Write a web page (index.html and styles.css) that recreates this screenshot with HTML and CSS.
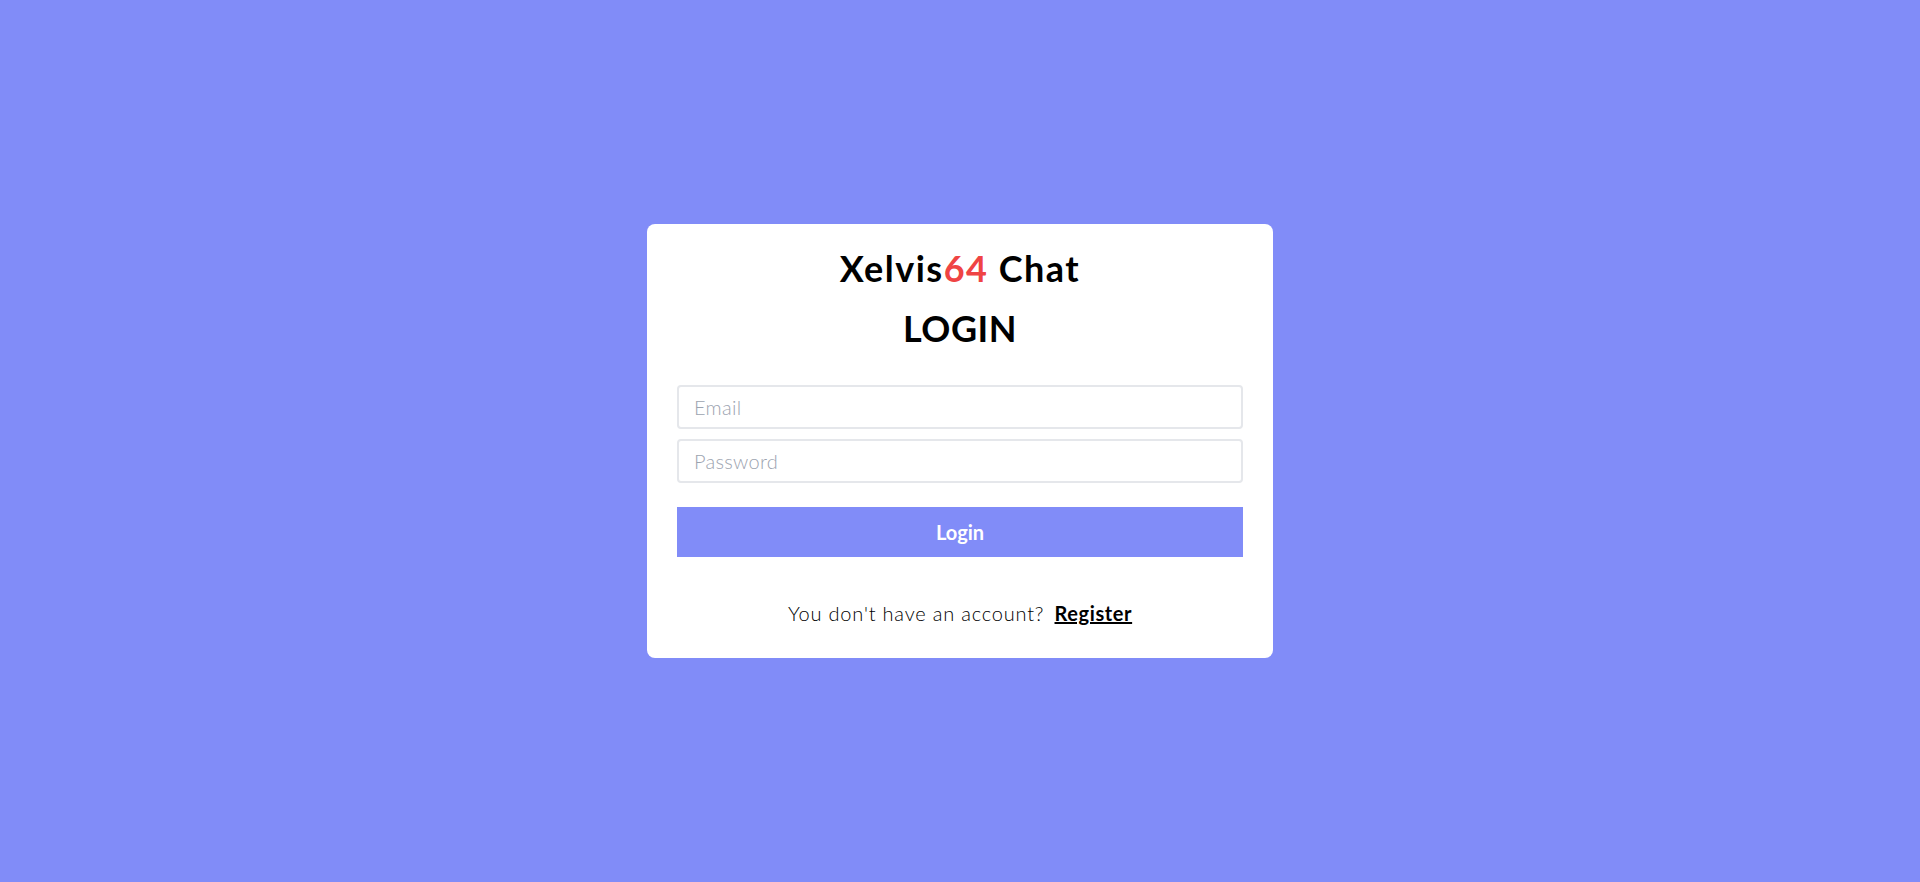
FILE: index.html
```html
<!DOCTYPE html>
<html lang="en">
<head>
<meta charset="utf-8">
<title>Xelvis64 Chat - Login</title>
<link rel="stylesheet" href="styles.css">
</head>
<body>
<main class="page">
  <div class="card">
    <h1 class="brand">Xelvis<span class="accent">64</span> Chat</h1>
    <h2 class="heading">LOGIN</h2>
    <form class="form">
      <input class="field" type="email" placeholder="Email">
      <input class="field" type="password" placeholder="Password">
      <button class="btn" type="button">Login</button>
    </form>
    <p class="footer">You don't have an account? <a class="link" href="#">Register</a></p>
  </div>
</main>
</body>
</html>
```

FILE: styles.css
```css
* { box-sizing: border-box; }
html, body { margin: 0; height: 100%; }
body {
  background: #818cf8;
  font-family: Lato, "Noto Sans", sans-serif;
}
.page {
  min-height: 100%;
  display: flex;
  align-items: center;
  justify-content: center;
}
.card {
  width: 626px;
  background: #fff;
  border-radius: 8px;
  padding: 20px 30px 32px;
  display: flex;
  flex-direction: column;
  align-items: center;
}
.brand {
  margin: 0;
  font-size: 36px;
  font-weight: 700;
  line-height: 48px;
  letter-spacing: 1.5px;
  color: #000;
}
.accent { color: #ef4444; }
.heading {
  margin: 12px 0 0;
  font-size: 36px;
  font-weight: 700;
  line-height: 48px;
  letter-spacing: 0.5px;
  color: #000;
}
.form {
  width: 100%;
  display: flex;
  flex-direction: column;
  gap: 10px;
  margin-top: 33px;
}
.field {
  width: 100%;
  height: 44px;
  border: 2px solid #e5e7eb;
  border-radius: 4px;
  padding: 0 15px;
  font-family: inherit;
  font-size: 20px;
  color: #111;
  outline: none;
}
.field::placeholder { color: #9ca3af; font-weight: 300; letter-spacing: 0.3px; }
.btn {
  margin-top: 14px;
  height: 50px;
  width: 100%;
  border: none;
  background: #818cf8;
  color: #fff;
  font-family: inherit;
  font-size: 20px;
  font-weight: 700;
}
.footer {
  margin: 43px 0 0;
  font-size: 20px;
  line-height: 26px;
  letter-spacing: 0.8px;
  color: #000;
  font-weight: 300;
}
.link {
  margin-left: 4px;
  color: #000;
  font-weight: 700;
  letter-spacing: 0.6px;
  text-decoration: underline;
}
```
